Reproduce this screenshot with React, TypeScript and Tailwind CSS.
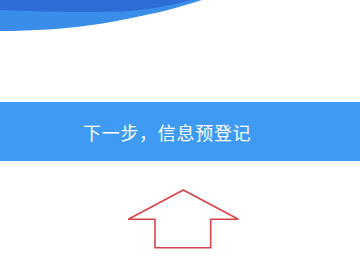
export default function App() {
  return (
    <div className="w-[360px] h-[270px] bg-white overflow-hidden flex flex-col" style={{ fontFamily: '"Noto Sans CJK SC", "Noto Sans", sans-serif' }}>
      <svg width="360" height="40" viewBox="0 0 360 40" className="block shrink-0">
        <path d="M0 0 H202 C185 5 168 11 150 14 C115 22 70 31 0 31 Z" fill="#3a8ee9" />
        <path d="M0 0 H192 C175 4 155 9 130 11 C95 13 50 12 0 10 Z" fill="#2f6dd6" />
      </svg>
      <div className="mt-[62px] h-[59px] bg-[#3e9af2] flex items-center pl-[83px]">
        <span className="text-white text-[18px] tracking-[0.7px] leading-none">下一步，信息预登记</span>
      </div>
      <div className="flex-1">
        <svg width="360" height="109" viewBox="0 161 360 109" className="block">
          <polygon
            points="183.3,190 238.3,219.3 210.7,219.3 210.7,247.7 155,247.7 155,219.3 128.3,219.3"
            fill="none"
            stroke="#d9434a"
            strokeWidth="1.6"
            strokeLinejoin="miter"
          />
        </svg>
      </div>
    </div>
  );
}
